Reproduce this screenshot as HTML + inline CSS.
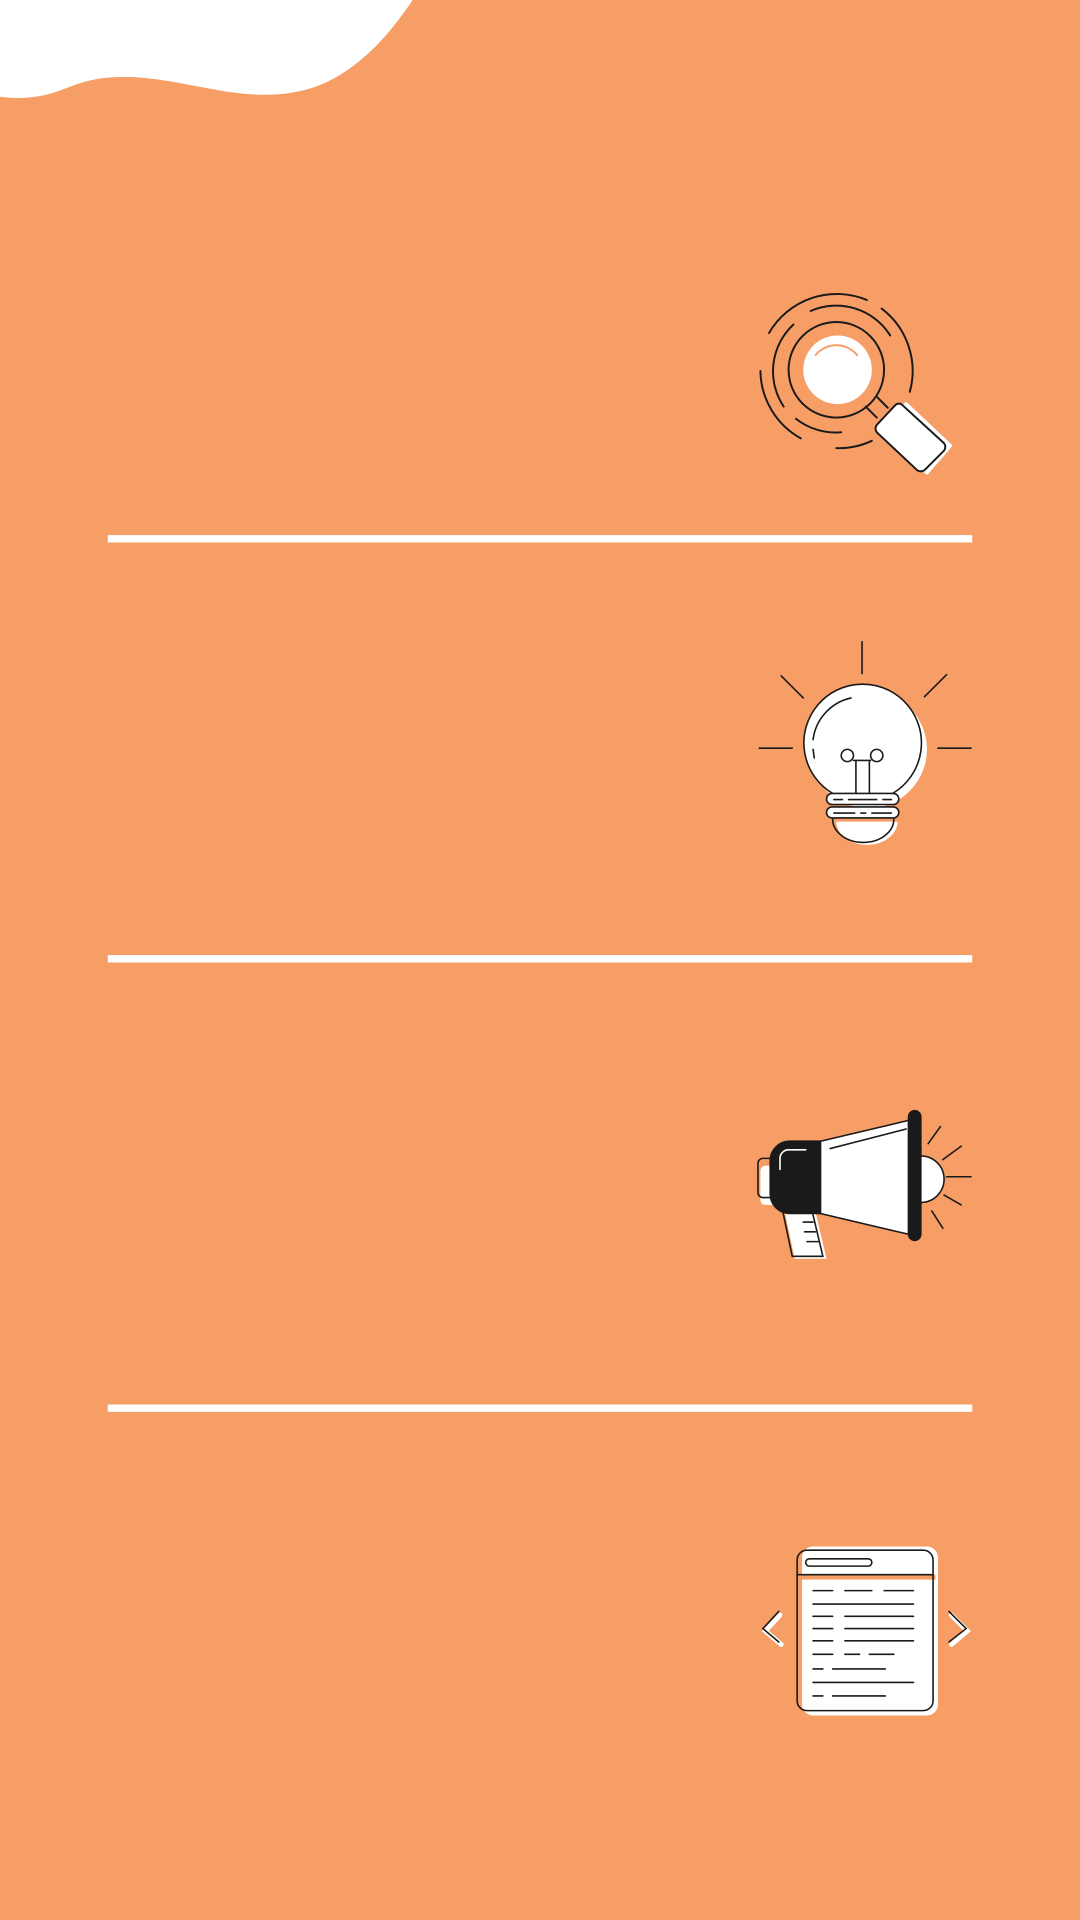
<!DOCTYPE html>
<html><head><meta charset="utf-8"><style>
html,body{margin:0;padding:0;background:#F79E66;}
svg{display:block}
</style></head><body>
<svg width="1080" height="1920" viewBox="0 0 882 1568" xmlns="http://www.w3.org/2000/svg">
<rect width="882" height="1568" fill="#F79E66"/>
<path d="M0 0 H337 C315 33 290 58 260 70 C235 79 210 79 180 74 C150 69 125 62 95 63 C65 64 55 74 35 78 C20 81 8 80 0 79 Z" fill="#fff"/>
<rect x="88" y="437" width="706" height="6" fill="#fff"/>
<rect x="88" y="780" width="706" height="6" fill="#fff"/>
<rect x="88" y="1147" width="706" height="6" fill="#fff"/>

<!-- magnifier -->
<g fill="none" stroke="#1a1a1a" stroke-width="1.6" stroke-linecap="round" stroke-linejoin="round">
<circle cx="684" cy="302" r="28" fill="#fff" stroke="none"/>
<path d="M666 290 A22 22 0 0 1 700 290" stroke="#F79E66"/>
<circle cx="683" cy="302" r="39"/>
<path d="M640 332 A52 52 0 0 1 648 265"/>
<path d="M662 254 A52 52 0 0 1 727 274"/>
<path d="M687 353 A52 52 0 0 1 650 342"/>
<path d="M628 272 A64 64 0 0 1 708 245"/>
<path d="M720 252 A64 64 0 0 1 743 320"/>
<path d="M654 358 A64 64 0 0 1 621 303"/>
<path d="M712 360 A64 64 0 0 1 683 366"/>
<path d="M707 332 L716 341 M716 324 L725 333"/>
<path d="M740 330 L776 364 L757 386 L720 352 Z" fill="#fff" stroke="#fff" stroke-width="3"/>
<path d="M736 330 L771 362 Q773 365 771 368 L755 384 Q752 386 749 384 L716 353 Q714 350 716 347 L731 331 Q733 329 736 330 Z" fill="#fff"/>
</g>

<!-- bulb -->
<g fill="none" stroke="#1a1a1a" stroke-width="1.3" stroke-linecap="round">
<circle cx="709" cy="612" r="48" fill="#fff" stroke="none"/>
<path d="M680 648 A48 48 0 1 1 729 648" fill="#fff"/>
<path d="M695 570 A40 40 0 0 0 664 604 M664 612 L665 619"/>
<path d="M704 524 V550 M638 552 L656 570 M773 551 L755 569 M620 611 H647 M766 611 H793"/>
<circle cx="692" cy="617" r="5"/><circle cx="716" cy="617" r="5"/>
<path d="M697 621 H711 M699 621 V648 M710 621 V648"/>
<path d="M683 671 A25 19 0 0 0 733 671 Z" fill="#fff" stroke="none"/>
<path d="M680 669 A25 19 0 0 0 730 669"/>
<rect x="675" y="648" width="59" height="9" rx="4.5" fill="#fff"/>
<rect x="675" y="659" width="59" height="9" rx="4.5" fill="#fff"/>
<path d="M681 653 H688 M693 653 H716 M721 653 H728 M681 664 H698 M703 664 H707 M712 664 H728"/>
</g>

<!-- megaphone -->
<g stroke="#1a1a1a" stroke-width="1.3" stroke-linecap="round" fill="none">
<rect x="621" y="952" width="18" height="32" rx="4" fill="#fff" stroke="none"/>
<rect x="619" y="946" width="16" height="32" rx="4"/>
<path d="M641 990 L649 1028 H675 L666 990 Z" fill="#fff" stroke="none"/>
<path d="M639 988 L647 1026 H672 L663 988"/>
<path d="M656 998 H664 M657 1006 H666 M659 1014 H668"/>
<path d="M670 932 L742 915 V1008 L670 991 Z" fill="#fff"/>
<path d="M678 938 L740 922" />
<path d="M752 944 A19 19 0 0 1 752 982" fill="#fff"/>
<rect x="742" y="907" width="10" height="106" rx="5" fill="#1a1a1a"/>
<path d="M645 932 H670 V991 H645 A16 16 0 0 1 629 975 V948 A16 16 0 0 1 645 932 Z" fill="#1a1a1a"/>
<path d="M637 955 V946 A7 7 0 0 1 644 939 H658" stroke="#fff"/>
<path d="M758 934 L768 920 M770 947 L785 936 M773 961 H793 M771 976 L785 984 M761 989 L770 1003"/>
</g>

<!-- document -->
<g stroke="#1a1a1a" stroke-width="1.3" stroke-linecap="round" fill="none">
<rect x="655" y="1263" width="111" height="138" rx="9" fill="#fff" stroke="none"/>
<rect x="651" y="1286" width="113" height="4" fill="#F79E66" stroke="none"/>
<rect x="651" y="1266" width="111" height="131" rx="8"/>
<path d="M651 1286 H762"/>
<rect x="658" y="1273" width="54" height="6" rx="3"/>
<path d="M664 1299 H680 M690 1299 H712 M722 1299 H746 M664 1310 H746 M664 1320 H680 M690 1320 H746 M664 1330 H680 M690 1330 H746 M664 1340 H680 M690 1340 H746 M664 1351 H680 M690 1351 H702 M710 1351 H730 M664 1363 H672 M680 1363 H723 M664 1374 H746 M664 1385 H672 M680 1385 H723"/>
<path d="M637 1319 L625 1332 L638 1343" stroke="#fff" stroke-width="4"/>
<path d="M636 1316 L623 1330 L636 1341"/>
<path d="M777 1319 L790 1332 L777 1343" stroke="#fff" stroke-width="4"/>
<path d="M775 1316 L789 1330 L775 1341"/>
</g>
</svg>
</body></html>
